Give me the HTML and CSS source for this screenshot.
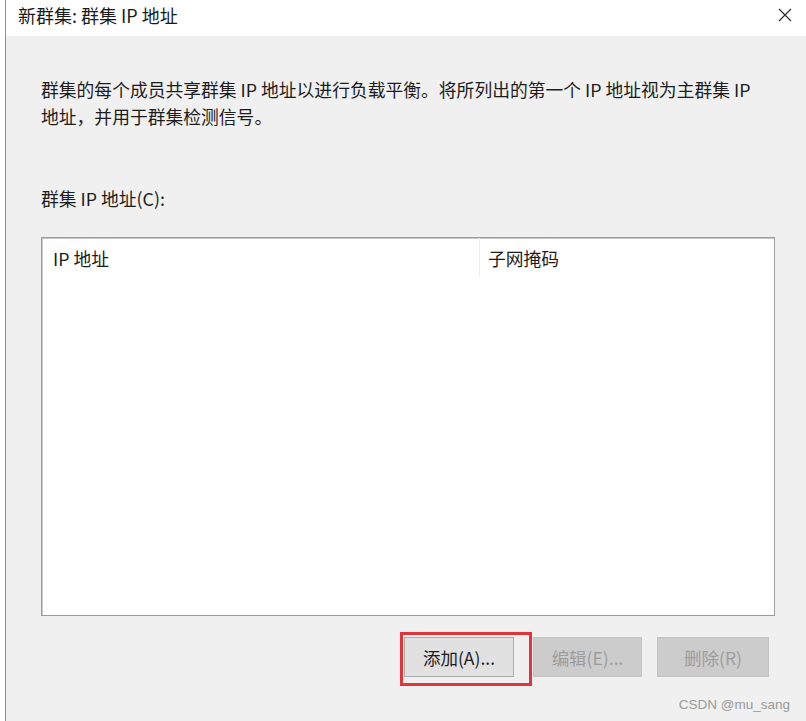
FILE: index.html
```html
<!DOCTYPE html>
<html lang="zh-CN">
<head>
<meta charset="utf-8">
<title>新群集: 群集 IP 地址</title>
<link rel="stylesheet" href="styles.css">
</head>
<body>
<div class="page">
  <div class="window">
    <div class="titlebar">
      <span class="title">新群集: 群集 IP 地址</span>
      <span class="close">
        <svg width="14" height="14" viewBox="0 0 14 14"><path d="M1 1 L13 13 M13 1 L1 13" stroke="#2b2b2b" stroke-width="1.2" fill="none"/></svg>
      </span>
    </div>
    <div class="content">
      <p class="desc">群集的每个成员共享群集 IP 地址以进行负载平衡。将所列出的第一个 IP 地址视为主群集 IP<br>地址，并用于群集检测信号。</p>
      <div class="label">群集 IP 地址(C):</div>
      <div class="listbox">
        <div class="header">
          <div class="col col-ip">IP 地址</div>
          <div class="col col-mask">子网掩码</div>
        </div>
      </div>
      <div class="buttons">
        <div class="btn-wrap">
          <button class="btn">添加(A)...</button>
          <span class="highlight"></span>
        </div>
        <button class="btn disabled">编辑(E)...</button>
        <button class="btn disabled">删除(R)</button>
      </div>
      <div class="watermark">CSDN @mu_sang</div>
    </div>
  </div>
</div>
</body>
</html>
```
FILE: styles.css
```css
html, body {
  margin: 0;
  padding: 0;
  background: #ffffff;
}
body {
  font-family: "Noto Sans CJK SC", "Liberation Sans", sans-serif;
  color: #1e1e1e;
}
.page {
  width: 806px;
  height: 721px;
  padding-left: 5px;
  box-sizing: border-box;
  overflow: hidden;
}
.window {
  height: 721px;
  border-left: 1px solid #5a9bd8;
  display: flex;
  flex-direction: column;
}
.titlebar {
  height: 36px;
  background: #ffffff;
  display: flex;
  align-items: center;
  justify-content: space-between;
  padding: 0 14px 6px 12px;
  box-sizing: border-box;
}
.title {
  font-size: 18px;
  line-height: 20px;
  color: #1a1a1a;
}
.close {
  display: flex;
  width: 14px;
  height: 14px;
}
.content {
  flex: 1;
  background: #f0f0f0;
  padding: 40px 0 0 35px;
  display: flex;
  flex-direction: column;
}
.desc {
  margin: 0;
  font-size: 17.8px;
  line-height: 27px;
  color: #1c1c1c;
  white-space: nowrap;
}
.label {
  margin-top: 55px;
  font-size: 17.8px;
  line-height: 27px;
  color: #1c1c1c;
}
.listbox {
  margin-top: 25px;
  width: 732px;
  height: 377px;
  background: #ffffff;
  border: 1px solid #9c9c9c;
  box-shadow: inset 1px 1px 0 #c8c8c8;
}
.header {
  display: flex;
  height: 38px;
  font-size: 17.8px;
  color: #1c1c1c;
}
.col {
  line-height: 40px;
}
.col-ip {
  width: 426px;
  padding-left: 11px;
  border-right: 1px solid #ececec;
}
.col-mask {
  padding-left: 8px;
}
.buttons {
  margin-top: 21px;
  margin-left: 363px;
  display: flex;
  gap: 19px;
}
.btn-wrap {
  position: relative;
  display: flex;
}
.btn {
  width: 110px;
  height: 40px;
  font-family: "Noto Sans CJK SC", "Liberation Sans", sans-serif;
  font-size: 17.5px;
  color: #1c1c1c;
  background: #e1e1e1;
  border: 1px solid #adadad;
  padding: 0;
}
.btn.disabled {
  background: #cccccc;
  border-color: #c4c4c4;
  color: #9d9d9d;
  width: 109px;
}
.btn.disabled:last-child {
  width: 112px;
  margin-left: -4px;
}
.highlight {
  position: absolute;
  left: -4px;
  top: -5px;
  width: 126px;
  height: 48px;
  border: 3px solid #e2353b;
}
.watermark {
  align-self: flex-end;
  margin-top: 20px;
  margin-right: 16px;
  font-family: "Liberation Sans", "DejaVu Sans", sans-serif;
  font-size: 13.5px;
  color: #9a9a9a;
}
```
